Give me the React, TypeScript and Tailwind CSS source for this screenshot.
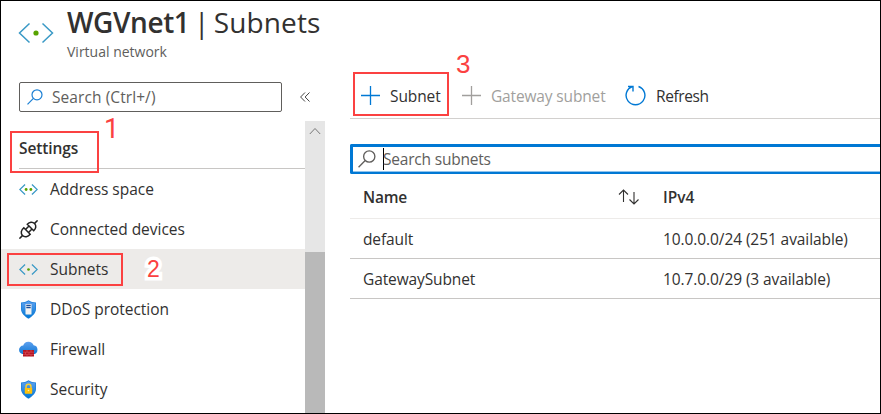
import React from "react";

const RED = "absolute border-2 border-[#fb4141] pointer-events-none";

function Brackets({ size, dots, strokeWidth }: { size: number; dots: number; strokeWidth: number }) {
  return (
    <svg width={size} height={size} viewBox="0 0 36 36" fill="none" className="shrink-0">
      <path d="M11.5 8.5 1.5 18l10 9.5M24.5 8.5l10 9.5-10 9.5" stroke="#3999c6" strokeWidth={strokeWidth} />
      {dots === 1 ? (
        <circle cx="18" cy="18" r="2.6" fill="#57a300" />
      ) : (
        <>
          <circle cx="13.5" cy="18" r="2.7" fill="#57a300" />
          <circle cx="22.5" cy="18" r="2.7" fill="#57a300" />
        </>
      )}
    </svg>
  );
}

function Plug() {
  return (
    <svg width="19" height="19" viewBox="0 0 19 19" fill="none" stroke="#222" strokeWidth="1.5" className="shrink-0">
      <path d="M.4 18.600 3.400 15.600M15.600 3.400 18.600.4" />
      <path d="M4.800 7.800 11.200 14.200C9 17 5.600 17.600 3.500 15.500C1.400 13.400 2 10 4.800 7.800Z" />
      <path d="M8.300 4.300 14.700 10.700C17 8.500 17.600 5.600 15.500 3.500C13.400 1.400 10.500 2 8.300 4.300Z" />
      <path d="M6.500 9.500 10 6M9.500 12.500 13 9" />
    </svg>
  );
}

function Shield({ children }: { children: React.ReactNode }) {
  return (
    <svg width="19" height="19" viewBox="0 0 19 19" className="shrink-0">
      <defs>
        <linearGradient id="shield" x1="0" y1="0" x2="0" y2="1">
          <stop offset="0" stopColor="#5ea0ef" />
          <stop offset="1" stopColor="#0078d4" />
        </linearGradient>
      </defs>
      <path d="M9.500.3C12 2.200 14 2.300 17 2.400V9C17 13.500 13 16.500 9.500 18.800C6 16.500 2 13.500 2 9V2.400C5 2.300 7 2.200 9.500.3Z" fill="#1b7fdb" />
      <path d="M9.500 1.300C12 3 14 3.100 16.300 3.200V9C16.300 13 12.700 15.800 9.500 18C6.300 15.800 2.700 13 2.700 9V3.200C5 3.100 7 3 9.500 1.300Z" fill="url(#shield)" />
      {children}
    </svg>
  );
}

function Ddos() {
  return (
    <Shield>
      <rect x="6.500" y="4" width="6" height="10.500" rx=".5" fill="#f2f2f2" />
      <path d="M7.300 5.500h4.400M7.300 7.700h4.400" stroke="#1b4f9c" strokeWidth="1.300" />
    </Shield>
  );
}

function Lock() {
  return (
    <Shield>
      <path d="M7 9V6.800a2.500 2.500 0 0 1 5 0V9" fill="none" stroke="#ffd02e" strokeWidth="1.400" />
      <rect x="5.800" y="8" width="7.400" height="5.700" rx=".6" fill="#fec10b" />
      <circle cx="9.500" cy="10.500" r=".8" fill="#fff0b0" />
    </Shield>
  );
}

function Firewall() {
  return (
    <svg width="19" height="19" viewBox="0 0 19 19" className="shrink-0">
      <defs>
        <linearGradient id="cloud" x1="0" y1="0" x2="0" y2="1">
          <stop offset="0" stopColor="#5ea0ef" />
          <stop offset="1" stopColor="#0f78d4" />
        </linearGradient>
      </defs>
      <path d="M4.500 14.200A4.300 4.300 0 0 1 4.200 5.600A5.500 5.500 0 0 1 14.600 5.300A4.500 4.500 0 0 1 14.700 14.200Z" fill="url(#cloud)" />
      <rect x="4" y="10" width="11" height="6.500" fill="#b31522" />
      <path d="M4 12.200h11M4 14.400h11M8 10v2.200M12 10v2.200M6.500 12.200v2.200M10 12.200v2.200M8 14.400v2.100M12 14.400v2.100" stroke="#e4626b" strokeWidth=".5" />
    </svg>
  );
}

function Magnifier({ size, color }: { size: number; color: string }) {
  return (
    <svg width={size} height={size} viewBox="0 0 16 16" fill="none" stroke={color} strokeWidth="1.200" className="shrink-0">
      <circle cx="10" cy="5.800" r="5" />
      <path d="M6.400 9.400.5 15.300" />
    </svg>
  );
}

function Plus({ color }: { color: string }) {
  return (
    <svg width="19" height="19" viewBox="0 0 19 19" stroke={color} strokeWidth="1.300" className="shrink-0">
      <path d="M0 9.500h19M9.500 0v19" />
    </svg>
  );
}

const items = [
  { label: "Address space", icon: <Brackets size={19} dots={2} strokeWidth={2.4} /> },
  { label: "Connected devices", icon: <Plug /> },
  { label: "Subnets", icon: <Brackets size={19} dots={1} strokeWidth={2.4} />, active: true },
  { label: "DDoS protection", icon: <Ddos /> },
  { label: "Firewall", icon: <Firewall /> },
  { label: "Security", icon: <Lock /> },
];

const rows = [
  { name: "default", ip: "10.0.0.0/24 (251 available)" },
  { name: "GatewaySubnet", ip: "10.7.0.0/29 (3 available)" },
];

export default function App() {
  return (
    <div className="relative flex h-[414px] w-[881px] flex-col overflow-hidden border border-black bg-white font-['Open_Sans','Noto_Sans',sans-serif] text-[15.5px] leading-5 text-[#323130]">
      <header className="flex h-[69px] shrink-0 pl-[17px]">
        <div className="pt-[14px]">
          <Brackets size={36} dots={1} strokeWidth={1.500} />
        </div>
        <div className="whitespace-nowrap pl-[13px] pt-[2px]">
          <h1 className="flex h-[38px] items-center text-[28px] leading-[38px]">
            <span className="w-[127px] font-semibold tracking-[-0.4px]">WGVnet1</span>
            <span className="tracking-[0.1px] [word-spacing:-3px]">| Subnets</span>
          </h1>
          <p className="pt-px text-[14px] leading-5 text-[#605e5c]">Virtual network</p>
        </div>
      </header>

      <div className="flex min-h-0 flex-1">
        <aside className="flex w-[324px] shrink-0 flex-col">
          <div className="flex h-[51px] shrink-0 pl-[18px] pt-3">
            <div className="flex h-[30px] w-[263px] items-center rounded-[2px] border border-[#605e5c] pl-[7px] text-[#605e5c]">
              <Magnifier size={16} color="#1a7fd4" />
              <span className="pl-[9px] tracking-[0.08px]">Search (Ctrl+/)</span>
            </div>
            <svg width="10" height="10" viewBox="0 0 10 10" fill="none" stroke="#444" className="ml-[18px] mt-[10px]">
              <path d="M5 .5.600 5 5 9.500M9.500.5 5.100 5l4.400 4.500" />
            </svg>
          </div>
          <div className="flex min-h-0 flex-1">
            <nav className="w-[304px] overflow-hidden">
              <div className="h-[48px] pl-[18px]">
                <h2 className="h-[48px] border-b border-[#c8c6c4] pt-[17px] font-semibold tracking-[-0.1px]">Settings</h2>
              </div>
              <ul>
                {items.map((it) => (
                  <li key={it.label} className={`flex h-10 items-center pl-[18px] ${it.active ? "bg-[#edebe9]" : ""}`}>
                    {it.icon}
                    <span className="pl-3 tracking-[-0.03px]">{it.label}</span>
                  </li>
                ))}
              </ul>
            </nav>
            <div className="flex w-5 flex-col bg-[#e6e6e6]">
              <div className="flex h-[131px] justify-center pt-[6px]">
                <svg width="12" height="8" viewBox="0 0 12 8" fill="none" stroke="#777">
                  <path d="M.8 7 6 1.500 11.200 7" />
                </svg>
              </div>
              <div className="flex-1 bg-[#b9b9b9]" />
            </div>
          </div>
        </aside>

        <main className="min-w-0 flex-1 pl-[25px]">
          <div className="flex h-[49px] items-center whitespace-nowrap border-b border-[#d2d0ce] pl-[11px]">
            <div className="flex w-[101px] items-center gap-[10px] pt-[3px]">
              <Plus color="#0078d4" />
              <span className="tracking-[-0.1px]">Subnet</span>
            </div>
            <div className="flex w-[163px] items-center gap-[10px] pt-[3px] text-[#a19f9d]">
              <Plus color="#a19f9d" />
              <span className="tracking-[-0.15px]">Gateway subnet</span>
            </div>
            <div className="flex items-center gap-[10px] pt-[3px]">
              <svg width="21" height="21" viewBox="0 0 21 21" fill="none" stroke="#0078d4" strokeWidth="1.400">
                <path d="M13.500 1.500A9.400 9.400 0 1 1 7.500 1.500M3 1.500H8V6.500" />
              </svg>
              <span className="tracking-[-0.4px]">Refresh</span>
            </div>
          </div>
          <div className="mt-[25px] flex h-[30px] items-center rounded-l-[2px] border-b-2 border-l-[3px] border-t-[3px] border-[#0078d4] pb-px pl-[5px] text-[#605e5c] shadow-[inset_0_-1px_0_#8fc3ec]">
            <Magnifier size={18} color="#605e5c" />
            <div className="ml-[7px] h-[22px] w-px bg-black" />
            <span className="-ml-px tracking-[-0.2px]">Search subnets</span>
          </div>
          <div className="flex h-[45px] items-center border-b border-[#edebe9] pl-[13px] pt-px font-semibold">
            <span className="w-[255px] tracking-[-0.2px]">Name</span>
            <svg width="22" height="16" viewBox="0 0 22 16" fill="none" stroke="#323130" strokeWidth="1.100">
              <path d="M5.500 13V1M1 5.500 5.500 1 10 5.500M16 3v12M11.500 10.500 16 15l4.500-4.500" />
            </svg>
            <span className="pl-[23px]">IPv4</span>
          </div>
          {rows.map((r) => (
            <div key={r.name} className="flex h-10 items-center border-b border-[#c8c6c4] pl-[13px]">
              <span className="w-[300px] tracking-[-0.12px]">{r.name}</span>
              <span className="tracking-[-0.09px]">{r.ip}</span>
            </div>
          ))}
        </main>
      </div>

      <div className={`${RED} left-[9px] top-[130px] h-[42px] w-[89px]`} />
      <div className={`${RED} left-[6px] top-[252px] h-[33px] w-[116px]`} />
      <div className={`${RED} left-[352px] top-[71px] h-[44px] w-[96px]`} />
      <span className="absolute left-[103px] top-[115px] font-['Roboto',sans-serif] text-[27px] leading-[26px] text-[#fb4141]">1</span>
      <span className="absolute left-[146px] top-[255px] font-['Liberation_Sans',sans-serif] text-[23px] leading-[26px] text-[#fb4141] [-webkit-text-stroke:7px_white] [paint-order:stroke_fill]">2</span>
      <span className="absolute left-[455px] top-[50px] font-['Liberation_Sans',sans-serif] text-[26px] leading-[26px] text-[#fb4141]">3</span>
    </div>
  );
}
